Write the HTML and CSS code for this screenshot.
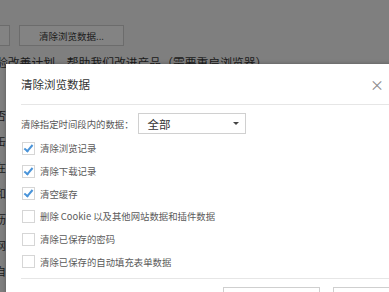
FILE: index.html
```html
<!DOCTYPE html>
<html lang="zh-CN">
<head>
    <meta charset="UTF-8">
    <meta name="viewport" content="width=device-width, initial-scale=1.0">
    <title>清除浏览数据</title>
    <link rel="stylesheet" href="styles.css">
</head>
<body>
    <div class="page">
        <div class="page-buttons">
            <button class="page-btn page-btn-cut">设置</button>
            <button class="page-btn">清除浏览数据...</button>
        </div>
        <p class="page-line">验改善计划，帮助我们改进产品（需要重启浏览器）</p>
        <ul class="page-side">
            <li>否</li>
            <li>缶</li>
            <li>在</li>
            <li>和</li>
            <li>沥</li>
            <li>网</li>
            <li>自</li>
        </ul>
    </div>

    <div class="dialog">
        <div class="dialog-header">
            <h2>清除浏览数据</h2>
            <span class="close">&times;</span>
        </div>
        <div class="dialog-body">
            <div class="time-row">
                <span>清除指定时间段内的数据：</span>
                <div class="select">
                    <span>全部</span>
                    <span class="arrow"></span>
                </div>
            </div>
            <label class="check-row"><span class="box checked"></span>清除浏览记录</label>
            <label class="check-row"><span class="box checked"></span>清除下载记录</label>
            <label class="check-row"><span class="box checked"></span>清空缓存</label>
            <label class="check-row"><span class="box"></span>删除 Cookie 以及其他网站数据和插件数据</label>
            <label class="check-row"><span class="box"></span>清除已保存的密码</label>
            <label class="check-row"><span class="box"></span>清除已保存的自动填充表单数据</label>
        </div>
        <div class="dialog-footer">
            <label class="check-row faded"><span class="box"></span>退出浏览器时自动清除</label>
            <div class="footer-buttons">
                <button class="btn">清除浏览数据</button>
                <button class="btn">取消</button>
            </div>
        </div>
    </div>
</body>
</html>
```

FILE: styles.css
```css
body {
    margin: 0;
    width: 389px;
    height: 292px;
    overflow: hidden;
    background-color: #7f7f7f;
    font-family: "Noto Sans CJK SC", "Noto Sans", sans-serif;
    position: relative;
}

.page {
    padding-top: 25px;
}

.page-buttons {
    display: flex;
    gap: 9px;
    margin-left: -60px;
}

.page-btn {
    width: 105px;
    height: 21px;
    padding: 0;
    background-color: #838383;
    border: 1px solid #6c6c6c;
    color: #1c1c1c;
    font-family: inherit;
    font-size: 9.5px;
}

.page-btn-cut {
    width: 70px;
}

.page-line {
    margin: 9px 0 0 -4px;
    font-size: 11.8px;
    line-height: 14px;
    color: #1a1a1a;
    white-space: nowrap;
}

.page-side {
    list-style: none;
    margin: 38px 0 0 -5px;
    padding: 0;
    font-size: 11px;
    color: #1a1a1a;
}

.page-side li {
    height: 26px;
}

.dialog {
    position: absolute;
    left: 6px;
    top: 64px;
    width: 440px;
    height: 260px;
    background-color: #fff;
    box-shadow: 0 0 4px rgba(0, 0, 0, 0.3);
}

.dialog-header {
    height: 40px;
    margin: 0 0 0 15px;
    padding-right: 62px;
    display: flex;
    align-items: center;
    justify-content: space-between;
    border-bottom: 1px solid #e6e6e6;
}

.dialog-header h2 {
    margin: 0;
    font-size: 11.5px;
    font-weight: normal;
    color: #333;
}

.close {
    font-size: 14px;
    color: #8a8a8a;
}

.dialog-body {
    padding: 8px 15px 0 15px;
}

.time-row {
    display: flex;
    align-items: center;
    height: 21px;
    font-size: 9.4px;
    color: #555;
    margin-bottom: 3px;
}

.select {
    width: 91px;
    height: 19px;
    margin-left: 4px;
    padding: 0 6px 0 9px;
    border: 1px solid #d0d0d0;
    display: flex;
    align-items: center;
    justify-content: space-between;
    font-size: 11.5px;
    color: #333;
}

.arrow {
    width: 0;
    height: 0;
    border-left: 3px solid transparent;
    border-right: 3px solid transparent;
    border-top: 3px solid #444;
}

.check-row {
    display: flex;
    align-items: center;
    height: 22.7px;
    font-size: 9.4px;
    color: #5a5a5a;
}

.box {
    width: 11px;
    height: 11px;
    margin: 0 5px 0 1px;
    border: 1px solid #d6d6d6;
    background-color: #fff;
    position: relative;
}

.box.checked::after {
    content: "";
    position: absolute;
    left: 3px;
    top: 0px;
    width: 3px;
    height: 7px;
    border-right: 2px solid #4a94d9;
    border-bottom: 2px solid #4a94d9;
    transform: rotate(40deg);
}

.dialog-footer {
    margin: 5px 0 0 15px;
    padding-top: 8px;
    border-top: 1px solid #e6e6e6;
    display: flex;
    justify-content: space-between;
    align-items: flex-start;
}

.faded {
    color: #d8d8d8;
}

.faded .box {
    border-color: #e2e2e2;
}

.footer-buttons {
    display: flex;
    gap: 13px;
    padding-right: 16px;
}

.btn {
    width: 97px;
    height: 24px;
    background-color: #fff;
    border: 1px solid #cfcfcf;
    color: #555;
    font-family: inherit;
    font-size: 9.4px;
}
```
